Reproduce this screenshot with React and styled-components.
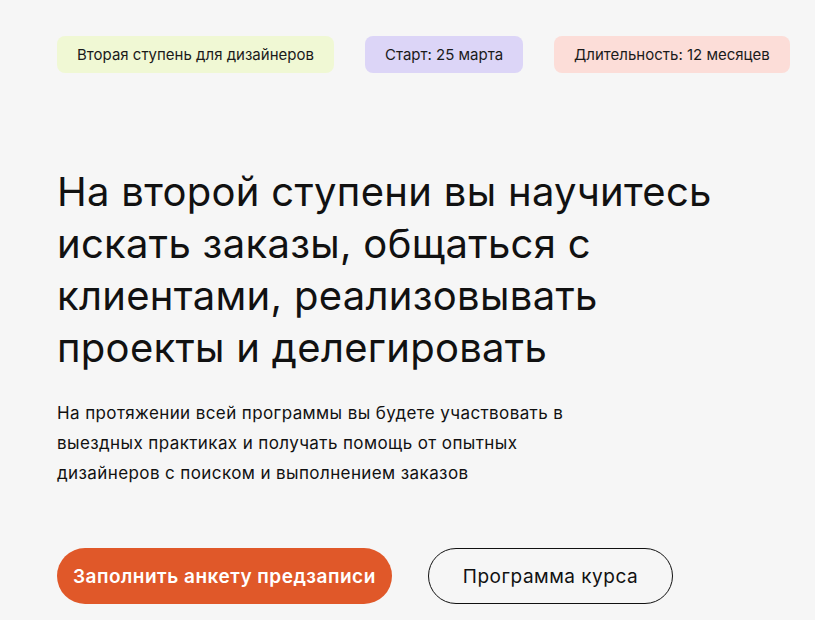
import React from "react";
import styled, { createGlobalStyle } from "styled-components";

const GlobalStyle = createGlobalStyle`
  body {
    margin: 0;
    background: #f6f6f6;
    font-family: "Inter", "Noto Sans", sans-serif;
    color: #111;
  }
`;

const Page = styled.div`
  padding: 36px 0 0 57px;
`;

const Tags = styled.div`
  display: flex;
  gap: 31px;
`;

const Tag = styled.div`
  flex-shrink: 0;
  white-space: nowrap;
  height: 37px;
  display: flex;
  align-items: center;
  padding: 0 20px;
  border-radius: 8px;
  font-size: 15px;
  background: ${(p) => p.bg};
  color: #1a1a1a;
`;

const Title = styled.h1`
  margin: 93px 0 0;
  font-size: 40px;
  font-weight: 400;
  line-height: 52px;
  letter-spacing: 0.3px;
  max-width: 690px;
`;

const Text = styled.p`
  margin: 24px 0 0;
  font-size: 17px;
  line-height: 30px;
  letter-spacing: 0.4px;
  max-width: 540px;
`;

const Buttons = styled.div`
  display: flex;
  gap: 36px;
  margin-top: 60px;
`;

const Button = styled.button`
  height: 56px;
  border-radius: 28px;
  font-family: inherit;
  font-size: 19px;
  letter-spacing: 0.5px;
  padding: 0 ${(p) => (p.primary ? "16px" : "34px")};
  font-weight: ${(p) => (p.primary ? 600 : 400)};
  background: ${(p) => (p.primary ? "#e05829" : "transparent")};
  color: ${(p) => (p.primary ? "#fff" : "#111")};
  border: ${(p) => (p.primary ? "none" : "1px solid #111")};
  cursor: pointer;
`;

export default function App() {
  return (
    <Page>
      <GlobalStyle />
      <Tags>
        <Tag bg="#f0f8d4">Вторая ступень для дизайнеров</Tag>
        <Tag bg="#dcd5f7">Старт: 25 марта</Tag>
        <Tag bg="#fcddd8">Длительность: 12 месяцев</Tag>
      </Tags>
      <Title>
        На второй ступени вы научитесь искать заказы, общаться с клиентами,
        реализовывать проекты и делегировать
      </Title>
      <Text>
        На протяжении всей программы вы будете участвовать в выездных практиках
        и получать помощь от опытных дизайнеров с поиском и выполнением заказов
      </Text>
      <Buttons>
        <Button primary>Заполнить анкету предзаписи</Button>
        <Button>Программа курса</Button>
      </Buttons>
    </Page>
  );
}
